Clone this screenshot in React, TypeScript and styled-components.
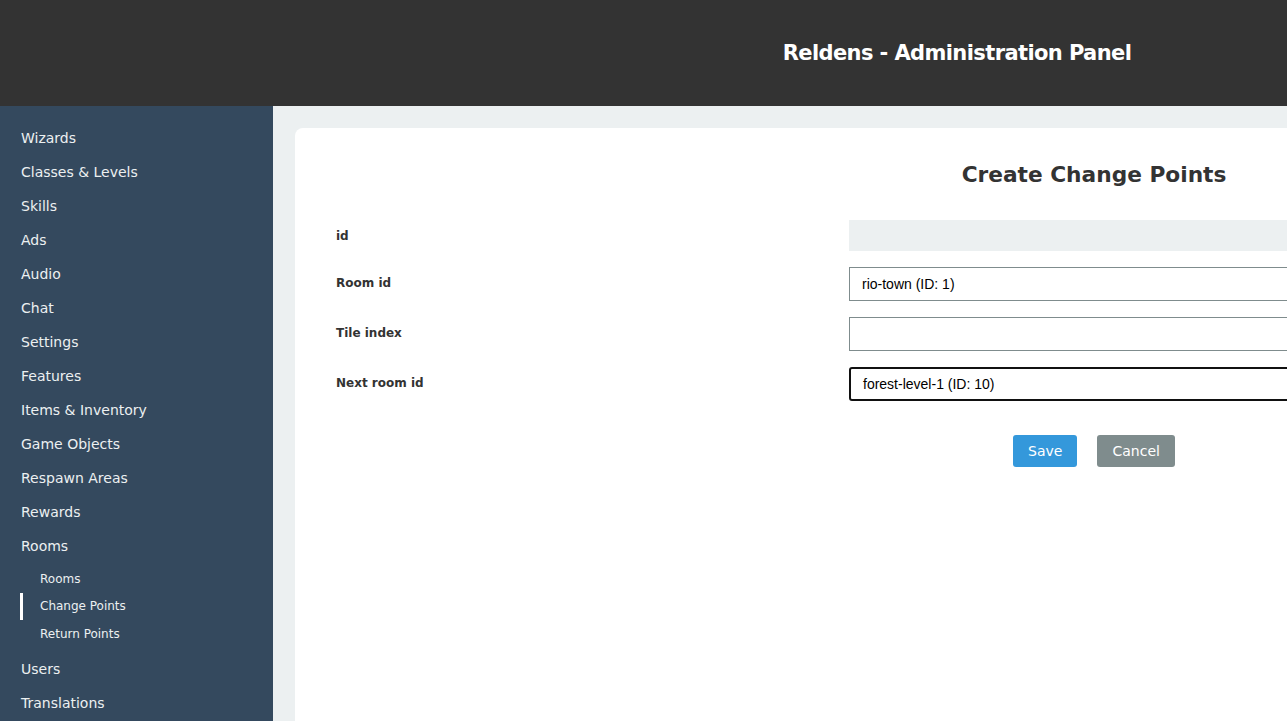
import styled, { createGlobalStyle } from "styled-components";

const GlobalStyle = createGlobalStyle`
  html, body {
    margin: 0;
    padding: 0;
    overflow: hidden;
    background: #ecf0f1;
  }
  * {
    box-sizing: border-box;
  }
`;

const menu = [
  "Wizards",
  "Classes & Levels",
  "Skills",
  "Ads",
  "Audio",
  "Chat",
  "Settings",
  "Features",
  "Items & Inventory",
  "Game Objects",
  "Respawn Areas",
  "Rewards",
];

const subMenu = [
  { label: "Rooms", active: false },
  { label: "Change Points", active: true },
  { label: "Return Points", active: false },
];

const App = () => {
  return (
    <>
      <GlobalStyle />
      <Page>
        <Header>
          <HeaderTitle>Reldens - Administration Panel</HeaderTitle>
        </Header>
        <Body>
          <Sidebar>
            {menu.map((item) => (
              <MenuItem key={item}>{item}</MenuItem>
            ))}
            <MenuItem>Rooms</MenuItem>
            <SubMenu>
              {subMenu.map((item) => (
                <SubItem key={item.label} $active={item.active}>
                  {item.label}
                </SubItem>
              ))}
            </SubMenu>
            <MenuItem>Users</MenuItem>
            <MenuItem>Translations</MenuItem>
          </Sidebar>
          <Main>
            <Card>
              <Title>Create Change Points</Title>
              <Form>
                <Row>
                  <Label>id</Label>
                  <ReadOnlyField />
                </Row>
                <Row>
                  <Label>Room id</Label>
                  <Field>rio-town (ID: 1)</Field>
                </Row>
                <Row>
                  <Label>Tile index</Label>
                  <Field />
                </Row>
                <Row>
                  <Label>Next room id</Label>
                  <Field $focused>forest-level-1 (ID: 10)</Field>
                </Row>
              </Form>
              <Actions>
                <Button $color="#3498db">Save</Button>
                <Button $color="#7f8c8d">Cancel</Button>
              </Actions>
            </Card>
          </Main>
        </Body>
      </Page>
    </>
  );
};

const Page = styled.div`
  width: 1914px;
  height: 721px;
  display: flex;
  flex-direction: column;
`;

const Header = styled.div`
  height: 106px;
  background-color: #333333;
  display: flex;
  align-items: center;
  justify-content: center;
  flex-shrink: 0;
`;

const HeaderTitle = styled.h1`
  margin: 0;
  color: #ffffff;
  font-family: "DejaVu Sans", sans-serif;
  font-weight: bold;
  font-size: 21px;
  letter-spacing: -0.6px;
`;

const Body = styled.div`
  flex: 1;
  display: flex;
  min-height: 0;
`;

const Sidebar = styled.nav`
  width: 273px;
  flex-shrink: 0;
  background-color: #34495e;
  padding: 15px 0 0 21px;
  font-family: "DejaVu Sans", Tahoma, sans-serif;
  color: #ecf0f1;
`;

const MenuItem = styled.div`
  height: 34px;
  display: flex;
  align-items: center;
  font-size: 14px;
`;

const SubMenu = styled.div`
  padding: 2px 0 4px;
`;

const SubItem = styled.div<{ $active: boolean }>`
  height: 27.5px;
  display: flex;
  align-items: center;
  font-size: 12px;
  border-left: 3px solid ${(p) => (p.$active ? "#ffffff" : "transparent")};
  margin-left: -1px;
  padding-left: 17px;
`;

const Main = styled.main`
  flex: 1;
  background-color: #ecf0f1;
  padding: 22px 21px 0 22px;
`;

const Card = styled.div`
  background: #ffffff;
  border-radius: 8px 8px 0 0;
  height: 100%;
  padding: 34px 41px;
`;

const Title = styled.h2`
  margin: 0 0 32px;
  text-align: center;
  font-family: "DejaVu Sans", Tahoma, sans-serif;
  font-weight: bold;
  font-size: 21.7px;
  color: #333333;
  line-height: 26px;
`;

const Form = styled.div`
  display: flex;
  flex-direction: column;
  gap: 16px;
`;

const Row = styled.div`
  display: grid;
  grid-template-columns: 513px 1fr;
  align-items: start;
`;

const Label = styled.div`
  font-family: "DejaVu Sans", Tahoma, sans-serif;
  font-weight: bold;
  font-size: 12px;
  color: #333333;
  padding-top: 9px;
`;

const ReadOnlyField = styled.div`
  height: 31px;
  background: #ecf0f1;
`;

const Field = styled.div<{ $focused?: boolean }>`
  height: 34px;
  border: ${(p) => (p.$focused ? "2px solid #111111" : "1px solid #7f8c8d")};
  border-radius: ${(p) => (p.$focused ? "3px" : "0")};
  display: flex;
  align-items: center;
  padding-left: 12px;
  font-family: "Liberation Sans", Arial, sans-serif;
  font-size: 14px;
  color: #000000;
`;

const Actions = styled.div`
  display: flex;
  justify-content: center;
  gap: 20px;
  margin-top: 34px;
`;

const Button = styled.button<{ $color: string }>`
  background-color: ${(p) => p.$color};
  color: #ffffff;
  border: none;
  border-radius: 3px;
  height: 32px;
  padding: 0 15px;
  font-family: "DejaVu Sans", Tahoma, sans-serif;
  font-size: 14px;
`;

export default App;
